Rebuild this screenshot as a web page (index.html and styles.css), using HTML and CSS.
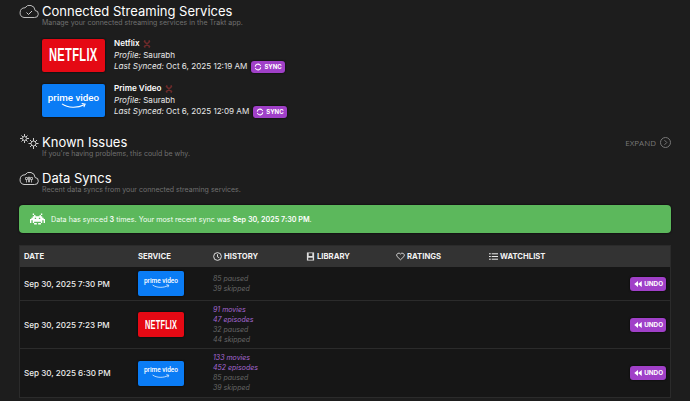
FILE: index.html
```html
<!DOCTYPE html>
<html lang="en">
<head>
<meta charset="utf-8">
<title>Connected Streaming Services</title>
<link rel="stylesheet" href="styles.css">
</head>
<body>
<main class="page">
  <section class="section connected">
    <svg class="sec-icon" viewBox="0 0 20 16"><path d="M5 14.500h10.500a3.500 3.500 0 0 0 .6-7A5.500 5.500 0 0 0 6 4.800 4.900 4.900 0 0 0 5 14.500z" fill="none" stroke="#bbb" stroke-width="1"/><path d="M7.500 9.500l2 2 3.500-3.500" fill="none" stroke="#ccc" stroke-width="1"/></svg>
    <div>
      <h2>Connected Streaming Services</h2>
      <p class="sub">Manage your connected streaming services in the Trakt app.</p>
    </div>
  </section>
  <div class="services">
    <div class="service">
      <div class="logo large netflix"><span>NETFLIX</span></div>
      <div class="info">
        <div class="name">Netflix <svg class="x" viewBox="0 0 8 8"><path d="M1 1l6 6M7 1L1 7M1 1h1.500M5.500 1H7M1 7h1.500M5.500 7H7" stroke="#6e2a2a" stroke-width="1.500"/></svg></div>
        <div><em>Profile:</em> Saurabh</div>
        <div class="synced"><span><em>Last Synced:</em> Oct 6, 2025 12:19 AM</span><span class="btn sync"><svg viewBox="0 0 10 10"><path d="M1.500 4.500a3.500 3.500 0 0 1 6-2l1 1M8.500 5.500a3.500 3.500 0 0 1-6 2l-1-1" fill="none" stroke="#fff" stroke-width="1.300"/></svg>SYNC</span></div>
      </div>
    </div>
    <div class="service">
      <div class="logo large prime"><span>prime video</span><svg viewBox="0 0 30 7"><path d="M1 1c7 5 18 5 26 1M24 0.500l4 .8-1.500 3.500" fill="none" stroke="#fff" stroke-width="1.200"/></svg></div>
      <div class="info">
        <div class="name">Prime Video <svg class="x" viewBox="0 0 8 8"><path d="M1 1l6 6M7 1L1 7M1 1h1.500M5.500 1H7M1 7h1.500M5.500 7H7" stroke="#6e2a2a" stroke-width="1.500"/></svg></div>
        <div><em>Profile:</em> Saurabh</div>
        <div class="synced"><span><em>Last Synced:</em> Oct 6, 2025 12:09 AM</span><span class="btn sync"><svg viewBox="0 0 10 10"><path d="M1.500 4.500a3.500 3.500 0 0 1 6-2l1 1M8.500 5.500a3.500 3.500 0 0 1-6 2l-1-1" fill="none" stroke="#fff" stroke-width="1.300"/></svg>SYNC</span></div>
      </div>
    </div>
  </div>
  <section class="section known">
    <svg class="sec-icon" viewBox="0 0 20 16"><g fill="none" stroke="#ccc" stroke-width="1"><circle cx="5.500" cy="4.500" r="2"/><path d="M5.500 0v2M5.500 7v2M1 4.500h2M8 4.500h2M2.500 1.500l1.500 1.500M8.500 1.500L7 3M2.500 7.500L4 6M8.500 7.500L7 6"/><circle cx="14.500" cy="9.500" r="2.500"/><path d="M14.500 4v3M14.500 12v3M9.500 9.500h2.500M17 9.500h2.500M11 6l2 2M18 6l-2 2M11 13l2-2M18 13l-2-2"/></g></svg>
    <div class="grow">
      <h2>Known Issues</h2>
      <p class="sub">If you're having problems, this could be why.</p>
    </div>
    <div class="expand">EXPAND <svg viewBox="0 0 11 11"><circle cx="5.500" cy="5.500" r="5" fill="none" stroke="#777"/><path d="M4.500 3.200l2.300 2.300-2.300 2.300" fill="none" stroke="#777"/></svg></div>
  </section>
  <section class="section syncs">
    <svg class="sec-icon" viewBox="0 0 20 16"><path d="M5 14.500h10.500a3.500 3.500 0 0 0 .6-7A5.500 5.500 0 0 0 6 4.800 4.900 4.900 0 0 0 5 14.500z" fill="none" stroke="#ccc"/><path d="M6.500 7.500h2v2h-2zM11.500 7.500h2v2h-2zM7.500 9.500v3M12.500 9.500v3M9.500 7h1v5h-1z" fill="none" stroke="#ccc" stroke-width=".8"/></svg>
    <div>
      <h2>Data Syncs</h2>
      <p class="sub">Recent data syncs from your connected streaming services.</p>
    </div>
  </section>
  <div class="banner">
    <svg viewBox="0 0 11 8" class="invader"><path fill="#fff" d="M2 0h1v1h1v1h3V1h1V0h1v1H8v1h1v1h1v1h1v3h-1V5H9v2H8v1H6V7h2V6H3v1h2v1H3V7H2V5H1v2H0V4h1V3h1V2h1V1H2z"/><path fill="#5cb85c" d="M3.500 3h1v1h-1zM6.500 3h1v1h-1z"/></svg>
    <span>Data has synced <b>3</b> times. Your most recent sync was <b>Sep 30, 2025 7:30 PM</b>.</span>
  </div>
  <div class="table">
    <div class="row head">
      <div class="c-date">DATE</div>
      <div class="c-service">SERVICE</div>
      <div class="c-history"><svg viewBox="0 0 10 10"><circle cx="5" cy="5" r="4.300" fill="none" stroke="#eee"/><path d="M5 2.500V5.300L7 6.500" fill="none" stroke="#eee"/></svg>HISTORY</div>
      <div class="c-library"><svg viewBox="0 0 10 10"><path fill="#ddd" d="M1 .5h8v9H1z"/><path fill="#333" d="M3 1.500h4v3H3zM2.500 6.500h5v2h-5z"/></svg>LIBRARY</div>
      <div class="c-ratings"><svg viewBox="0 0 11 10"><path d="M5.500 9L1.300 5a2.500 2.500 0 0 1 4.200-3 2.500 2.500 0 0 1 4.200 3z" fill="none" stroke="#eee"/></svg>RATINGS</div>
      <div class="c-watch"><svg viewBox="0 0 10 10"><path d="M3 2h7M3 5h7M3 8h7M0 2h2M0 5h2M0 8h2" stroke="#eee" stroke-width="1.100"/></svg>WATCHLIST</div>
    </div>
    <div class="row body r1">
      <div class="c-date">Sep 30, 2025 7:30 PM</div>
      <div class="c-service"><div class="logo small prime"><span>prime video</span><svg viewBox="0 0 30 7"><path d="M1 1c7 5 18 5 26 1M24 0.500l4 .8-1.500 3.500" fill="none" stroke="#fff" stroke-width="1.200"/></svg></div></div>
      <div class="c-history stats"><i>85 paused</i><i>39 skipped</i></div>
      <div class="c-action"><span class="btn undo"><svg viewBox="0 0 10 8"><path fill="#fff" d="M5 0v8L0 4zM10 0v8L5 4z"/></svg>UNDO</span></div>
    </div>
    <div class="row body r2">
      <div class="c-date">Sep 30, 2025 7:23 PM</div>
      <div class="c-service"><div class="logo small netflix"><span>NETFLIX</span></div></div>
      <div class="c-history stats"><i class="hi">91 movies</i><i class="hi">47 episodes</i><i>32 paused</i><i>44 skipped</i></div>
      <div class="c-action"><span class="btn undo"><svg viewBox="0 0 10 8"><path fill="#fff" d="M5 0v8L0 4zM10 0v8L5 4z"/></svg>UNDO</span></div>
    </div>
    <div class="row body r3">
      <div class="c-date">Sep 30, 2025 6:30 PM</div>
      <div class="c-service"><div class="logo small prime"><span>prime video</span><svg viewBox="0 0 30 7"><path d="M1 1c7 5 18 5 26 1M24 0.500l4 .8-1.500 3.500" fill="none" stroke="#fff" stroke-width="1.200"/></svg></div></div>
      <div class="c-history stats"><i class="hi">133 movies</i><i class="hi">452 episodes</i><i>85 paused</i><i>39 skipped</i></div>
      <div class="c-action"><span class="btn undo"><svg viewBox="0 0 10 8"><path fill="#fff" d="M5 0v8L0 4zM10 0v8L5 4z"/></svg>UNDO</span></div>
    </div>
  </div>
</main>
</body>
</html>
```
FILE: styles.css
```css
* { box-sizing: border-box; }
html, body { margin: 0; padding: 0; height: 100%; overflow: hidden; }
body { background: #1d1d1d; color: #eee; font-family: "Inter", "Liberation Sans", sans-serif; }
.page { padding: 0 19px; width: 690px; }
.section { display: flex; align-items: flex-start; }
.sec-icon { width: 20px; height: 16px; margin-right: 3px; flex: none; }
.grow { flex: 1; }
h2 { margin: 0; font-size: 13px; font-weight: 400; line-height: 16px; color: #fff; }
.sub { margin: -1px 0 0; font-size: 7px; line-height: 10px; color: #707070; }
.connected { padding-top: 3px; }
.services { padding: 11px 0 0 23px; display: flex; flex-direction: column; gap: 12px; }
.service { display: flex; align-items: center; height: 33px; }
.logo { border-radius: 2px; display: flex; flex-direction: column; align-items: center; justify-content: center; color: #fff; box-shadow: 0 0 2px #000; }
.large { width: 63px; height: 33px; margin-right: 9px; }
.small { width: 46px; height: 25px; }
.netflix { background: #e50914; }
.prime { background: #0a7cf5; }
.netflix span { font-family: "Liberation Sans", sans-serif; font-weight: 700; display: block; }
.large.netflix span { font-size: 18px; letter-spacing: .5px; transform: scaleX(.62); }
.small.netflix span { font-size: 13px; letter-spacing: .3px; transform: scaleX(.57); }
.prime span { font-family: "Roboto", sans-serif; font-weight: 500; line-height: 1; }
.large.prime span { font-size: 9.800px; margin-top: 1px; }
.small.prime span { font-size: 6.500px; }
.large.prime svg { width: 26px; height: 6px; }
.small.prime svg { width: 18px; height: 5px; }
.info { font-size: 8.100px; line-height: 11.500px; color: #e8e8e8; }
.name { font-weight: 600; color: #fff; display: flex; align-items: center; gap: 3px; }
.x { width: 8px; height: 8px; }
.btn { display: inline-flex; align-items: center; background: #a040c8; color: #fff; font-weight: 700; border-radius: 3px; box-shadow: 0 0 2px #000; }
.synced { display: flex; align-items: center; gap: 4px; white-space: nowrap; }
.sync { font-size: 6px; height: 12px; padding: 0 3px; gap: 2px; }
.sync svg { width: 8px; height: 8px; }
.known { margin-top: 17px; }
.expand { font-size: 8px; color: #777; display: flex; align-items: center; gap: 4px; padding-top: 3px; font-family: "Open Sans", sans-serif; }
.expand svg { width: 11px; height: 11px; }
.syncs { margin-top: 11px; }
.banner { margin-top: 10px; height: 28px; background: #5cb85c; border-radius: 4px; display: flex; align-items: center; padding-left: 11px; gap: 6px; font-size: 7.200px; color: #f4fff4; box-shadow: 0 0 2px #000; }
.invader { width: 15px; height: 12px; }
.banner b { font-weight: 600; color: #fff; }
.table { margin-top: 12px; border: 1px solid #2b2b2b; background: #161616; width: 652px; }
.row { display: grid; grid-template-columns: 114px 75px 93px 90px 93px 1fr; align-items: center; padding-left: 4px; }
.head { height: 21px; background: #333; font-size: 7.700px; font-weight: 700; color: #f2f2f2; }
.head > div { display: flex; align-items: center; gap: 2px; }
.head svg { width: 9px; height: 9px; }
.body { font-size: 8.100px; font-weight: 500; color: #eee; border-top: 1px solid #2b2b2b; }
.r1 { border-top: 0; height: 33px; }
.r2 { height: 48px; }
.r3 { height: 49px; }
.stats { display: flex; flex-direction: column; font-size: 7px; font-weight: 400; line-height: 10px; color: #666; }
.stats i { display: block; }
.stats .hi { color: #a768d4; }
.c-action { grid-column: 6; justify-self: end; padding-right: 4px; }
.undo { font-size: 6.300px; height: 14px; padding: 0 3px 0 4px; gap: 2px; }
.undo svg { width: 8px; height: 6px; }
```
